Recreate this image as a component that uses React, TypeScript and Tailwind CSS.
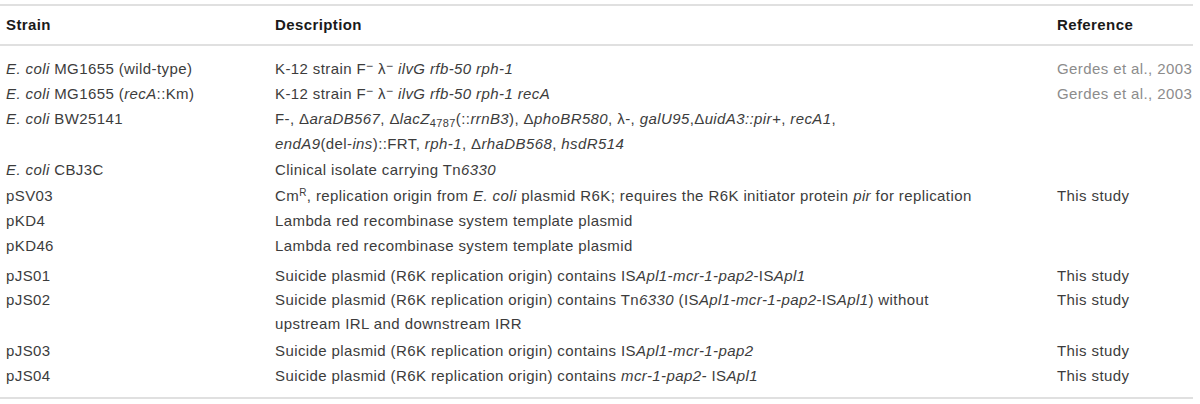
import type { ReactNode } from "react";

type Row = {
  strain: ReactNode;
  desc: ReactNode;
  ref?: ReactNode;
  refMuted?: boolean;
  cls: string;
};

const I = ({ children }: { children: ReactNode }) => <i>{children}</i>;
const Minus = () => <sup className="text-[12px] -top-[0.3em]">−</sup>;
const Sup = ({ children }: { children: ReactNode }) => <sup className="text-[10px]">{children}</sup>;
const Sub = ({ children }: { children: ReactNode }) => <sub className="text-[11px]">{children}</sub>;

const suicide = "Suicide plasmid (R6K replication origin) contains ";

const rows: Row[] = [
  {
    strain: <><I>E. coli</I> MG1655 (wild-type)</>,
    desc: <>K-12 strain F<Minus /> λ<Minus /> <I>ilvG rfb-50 rph-1</I></>,
    ref: "Gerdes et al., 2003",
    refMuted: true,
    cls: "h-[25px]",
  },
  {
    strain: <><I>E. coli</I> MG1655 (<I>recA</I>::Km)</>,
    desc: <>K-12 strain F<Minus /> λ<Minus /> <I>ilvG rfb-50 rph-1 recA</I></>,
    ref: "Gerdes et al., 2003",
    refMuted: true,
    cls: "h-[25px]",
  },
  {
    strain: <><I>E. coli</I> BW25141</>,
    desc: (
      <>
        F-, Δ<I>araDB567</I>, Δ<I>lacZ</I><Sub>4787</Sub>(::<I>rrnB3</I>), Δ<I>phoBR580</I>, λ-, <I>galU95</I>,Δ<I>uidA3::pir+</I>, <I>recA1</I>,
        <br />
        <I>endA9</I>(del-<I>ins</I>)::FRT, <I>rph-1</I>, Δ<I>rhaDB568</I>, <I>hsdR514</I>
      </>
    ),
    cls: "h-[50px]",
  },
  {
    strain: <><I>E. coli</I> CBJ3C</>,
    desc: <>Clinical isolate carrying Tn<I>6330</I></>,
    cls: "h-[26px] pt-[1px]",
  },
  {
    strain: "pSV03",
    desc: <>Cm<Sup>R</Sup>, replication origin from <I>E. coli</I> plasmid R6K; requires the R6K initiator protein <I>pir</I> for replication</>,
    ref: "This study",
    cls: "h-[26px] pt-[1px]",
  },
  { strain: "pKD4", desc: "Lambda red recombinase system template plasmid", cls: "h-[25px]" },
  { strain: "pKD46", desc: "Lambda red recombinase system template plasmid", cls: "h-[25px]" },
  {
    strain: "pJS01",
    desc: <>{suicide}IS<I>Apl1-mcr-1-pap2</I>-IS<I>Apl1</I></>,
    ref: "This study",
    cls: "h-[30px] pt-[5px]",
  },
  {
    strain: "pJS02",
    desc: (
      <>
        {suicide}Tn<I>6330</I> (IS<I>Apl1-mcr-1-pap2</I>-IS<I>Apl1</I>) without
        <br />
        upstream IRL and downstream IRR
      </>
    ),
    ref: "This study",
    cls: "h-[48px] leading-[24px]",
  },
  {
    strain: "pJS03",
    desc: <>{suicide}IS<I>Apl1-mcr-1-pap2</I></>,
    ref: "This study",
    cls: "h-[27px] pt-[2px]",
  },
  {
    strain: "pJS04",
    desc: <>{suicide}<I>mcr-1-pap2-</I> IS<I>Apl1</I></>,
    ref: "This study",
    cls: "h-[25px]",
  },
];

export default function App() {
  return (
    <div className="h-[404px] w-[1200px] bg-white pt-[4px] font-['Liberation_Sans',Arial,sans-serif] text-[15px] tracking-[0.4px] text-[#3c3c3c]">
      <div className="w-[1193px] border-y-2 border-[#e0e0e0]">
        <div className="grid h-[38px] grid-cols-[269px_782px_1fr] items-center pl-[6px] font-bold text-[#1a1a1a]">
          <div>Strain</div>
          <div>Description</div>
          <div>Reference</div>
        </div>
        <div className="border-t-2 border-[#e0e0e0] pt-[10px] pb-[9px] leading-[25px]">
          {rows.map((row, index) => (
            <div key={index} className={`grid grid-cols-[269px_782px_1fr] pl-[6px] ${row.cls}`}>
              <div className="whitespace-nowrap">{row.strain}</div>
              <div className="whitespace-nowrap">{row.desc}</div>
              <div className={row.refMuted ? "whitespace-nowrap text-[#8c8c8c]" : "whitespace-nowrap"}>{row.ref}</div>
            </div>
          ))}
        </div>
      </div>
    </div>
  );
}
